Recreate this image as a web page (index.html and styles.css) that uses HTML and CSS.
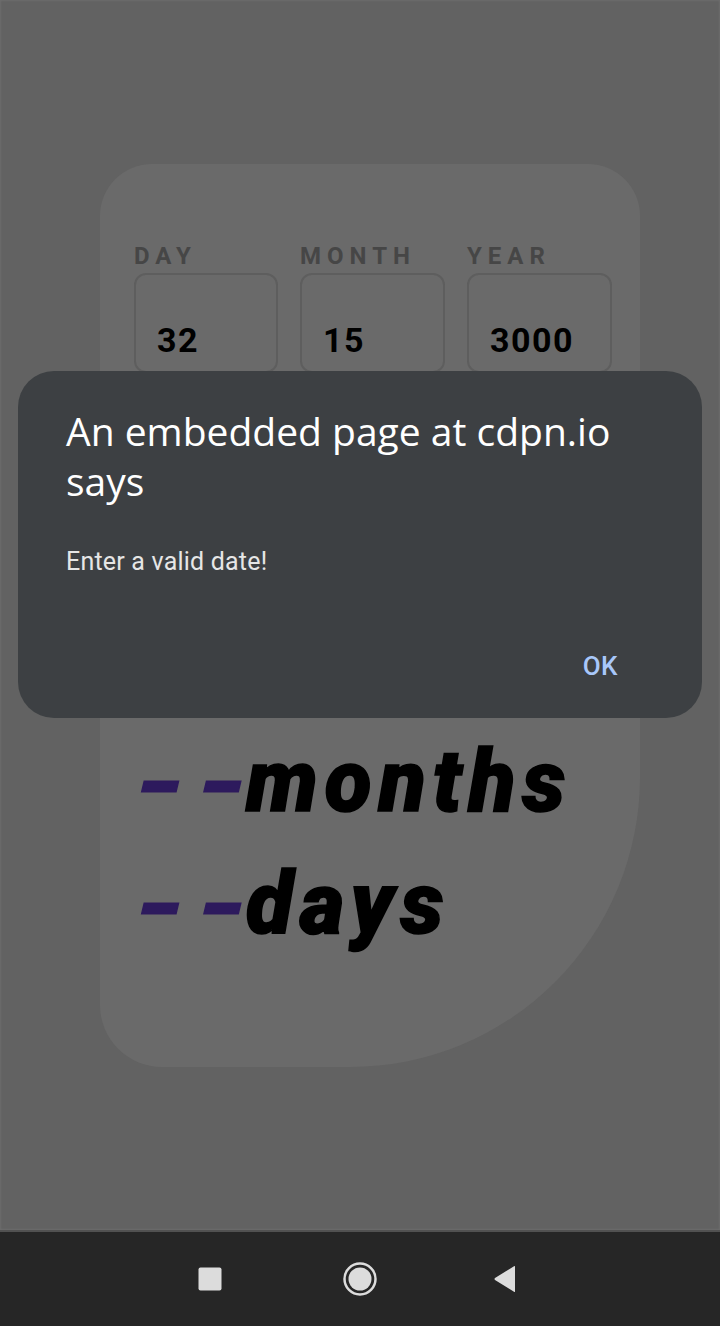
FILE: index.html
```html
<!DOCTYPE html>
<html lang="en">
<head>
    <meta charset="UTF-8">
    <meta name="viewport" content="width=device-width, initial-scale=1.0">
    <title>Age Calculator</title>
    <link rel="stylesheet" href="styles.css">
</head>
<body>
    <div class="screen">
        <div class="card">
            <div class="fields">
                <div class="field">
                    <label>DAY</label>
                    <div class="input">32</div>
                </div>
                <div class="field">
                    <label>MONTH</label>
                    <div class="input">15</div>
                </div>
                <div class="field">
                    <label>YEAR</label>
                    <div class="input">3000</div>
                </div>
            </div>

            <div class="results">
                <p><span class="dash">--</span>years</p>
                <p><span class="dash">--</span>months</p>
                <p><span class="dash">--</span>days</p>
            </div>
        </div>

        <!-- alert dialog over the page -->
        <div class="dialog">
            <h3>An embedded page at cdpn.io says</h3>
            <p class="dialog-msg">Enter a valid date!</p>
            <div class="dialog-actions">
                <span class="ok">OK</span>
            </div>
        </div>
    </div>

    <div class="navbar">
        <span class="nav-btn">
            <svg width="24" height="24" viewBox="0 0 24 24"><rect x="0.5" y="0.5" width="23" height="23" rx="2" fill="#dcdcdc"/></svg>
        </span>
        <span class="nav-btn">
            <svg width="36" height="36" viewBox="0 0 36 36"><circle cx="18" cy="18" r="15.5" fill="none" stroke="#dcdcdc" stroke-width="2.5"/><circle cx="18" cy="18" r="11.5" fill="#dcdcdc"/></svg>
        </span>
        <span class="nav-btn back">
            <svg width="24" height="28" viewBox="0 0 24 28"><path d="M22 1.5 L22 26.5 Q22 27.5 21 26.8 L2 15 Q1 14 2 13 L21 1.2 Q22 0.6 22 1.5 Z" fill="#dcdcdc"/></svg>
        </span>
    </div>
</body>
</html>
```

FILE: styles.css
```css
body {
    margin: 0;
    font-family: 'Roboto', 'Liberation Sans', sans-serif;
    background: #262626;
}
.screen {
    position: relative;
    height: 1230px;
    padding-top: 164px;
    box-sizing: border-box;
    background: #626262;
    box-shadow: inset 0 0 2px 1px #6c6c6c;
    overflow: hidden;
}
.card {
    margin-left: 100px;
    width: 540px;
    height: 903px;
    box-sizing: border-box;
    padding: 79px 28px 0 34px;
    background: #6a6a6a;
    border-radius: 52px 52px 290px 62px;
}
.fields {
    display: grid;
    grid-template-columns: 144px 145px 145px;
    column-gap: 22px;
}
.field label {
    display: block;
    font-weight: 700;
    font-size: 24px;
    letter-spacing: 6px;
    color: #464646;
    line-height: 26px;
    margin-bottom: 4px;
}
.input {
    height: 100px;
    box-sizing: border-box;
    border: 2px solid #5e5e5e;
    border-radius: 12px;
    padding: 45px 0 0 21px;
    font-weight: 700;
    font-size: 34px;
    line-height: 40px;
    letter-spacing: 1.5px;
    color: #000;
}
.results {
    margin-top: 226px;
}
.results p {
    margin: 0;
    font-size: 86px;
    line-height: 122px;
    font-weight: 900;
    font-style: italic;
    color: #000;
    letter-spacing: 7px;
    -webkit-text-stroke: 1.5px #000;
}
.results .dash {
    display: inline-block;
    width: 112px;
    color: #2d1a5d;
    -webkit-text-stroke: 1px #2d1a5d;
    letter-spacing: 7px;
    transform: translateY(2px) scaleX(1.4);
    transform-origin: left center;
}

/* Alert dialog */
.dialog {
    position: absolute;
    top: 371px;
    left: 18px;
    width: 684px;
    height: 347px;
    box-sizing: border-box;
    padding: 35px 48px 0 48px;
    background: #3d4043;
    border-radius: 36px;
}
.dialog h3 {
    margin: 0;
    max-width: 560px;
    font-family: 'Open Sans', sans-serif;
    font-weight: 400;
    font-size: 39px;
    line-height: 50px;
    color: #ffffff;
}
.dialog-msg {
    margin: 42px 0 0;
    font-size: 25px;
    line-height: 28px;
    letter-spacing: 0.2px;
    color: #e6e6e6;
}
.dialog-actions {
    margin-top: 75px;
    text-align: right;
    padding-right: 36px;
}
.ok {
    font-size: 26px;
    line-height: 30px;
    font-weight: 500;
    letter-spacing: 0.5px;
    color: #a8c7fa;
}

/* Android nav bar */
.navbar {
    height: 96px;
    box-sizing: border-box;
    border-top: 2px solid #515151;
    background: #262626;
    display: flex;
    justify-content: center;
    align-items: center;
    gap: 50px;
}
.nav-btn {
    width: 100px;
    display: flex;
    justify-content: center;
}
.nav-btn.back svg {
    margin-right: 10px;
}
```
